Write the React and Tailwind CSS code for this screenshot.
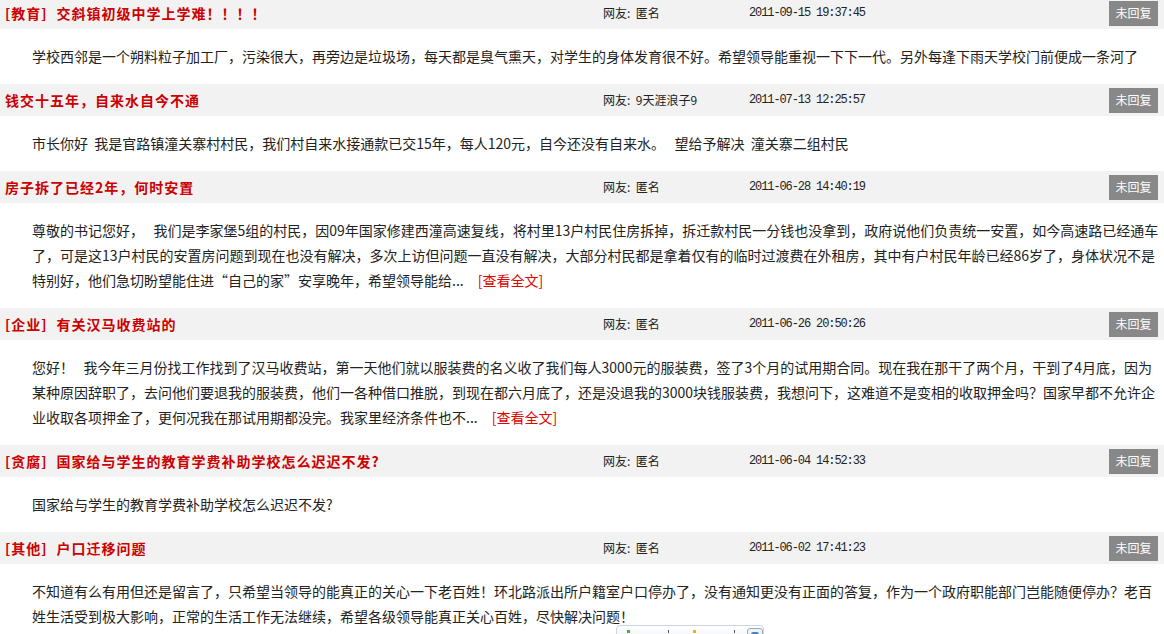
import React from "react";

const posts = [
  {
    tag: "[教育]",
    title: "交斜镇初级中学上学难！！！！",
    author: "匿名",
    date: "2011-09-15 19:37:45",
    lines: [
      "学校西邻是一个朔料粒子加工厂，污染很大，再旁边是垃圾场，每天都是臭气熏天，对学生的身体发育很不好。希望领导能重视一下下一代。另外每逢下雨天学校门前便成一条河了",
    ],
  },
  {
    tag: "",
    title: "钱交十五年，自来水自今不通",
    author: "9天涯浪子9",
    date: "2011-07-13 12:25:57",
    lines: ["市长你好  我是官路镇潼关寨村村民，我们村自来水接通款已交15年，每人120元，自今还没有自来水。   望给予解决  潼关寨二组村民"],
  },
  {
    tag: "",
    title: "房子拆了已经2年，何时安置",
    author: "匿名",
    date: "2011-06-28 14:40:19",
    more: true,
    lines: [
      "尊敬的书记您好，   我们是李家堡5组的村民，因09年国家修建西潼高速复线，将村里13户村民住房拆掉，拆迁款村民一分钱也没拿到，政府说他们负责统一安置，如今高速路已经通车",
      "了，可是这13户村民的安置房问题到现在也没有解决，多次上访但问题一直没有解决，大部分村民都是拿着仅有的临时过渡费在外租房，其中有户村民年龄已经86岁了，身体状况不是",
      "特别好，他们急切盼望能住进“自己的家”安享晚年，希望领导能给...",
    ],
  },
  {
    tag: "[企业]",
    title: "有关汉马收费站的",
    author: "匿名",
    date: "2011-06-26 20:50:26",
    more: true,
    lines: [
      "您好！   我今年三月份找工作找到了汉马收费站，第一天他们就以服装费的名义收了我们每人3000元的服装费，签了3个月的试用期合同。现在我在那干了两个月，干到了4月底，因为",
      "某种原因辞职了，去问他们要退我的服装费，他们一各种借口推脱，到现在都六月底了，还是没退我的3000块钱服装费，我想问下，这难道不是变相的收取押金吗？国家早都不允许企",
      "业收取各项押金了，更何况我在那试用期都没完。我家里经济条件也不...",
    ],
  },
  {
    tag: "[贪腐]",
    title: "国家给与学生的教育学费补助学校怎么迟迟不发?",
    author: "匿名",
    date: "2011-06-04 14:52:33",
    lines: ["国家给与学生的教育学费补助学校怎么迟迟不发?"],
  },
  {
    tag: "[其他]",
    title: "户口迁移问题",
    author: "匿名",
    date: "2011-06-02 17:41:23",
    lines: [
      "不知道有么有用但还是留言了，只希望当领导的能真正的关心一下老百姓！环北路派出所户籍室户口停办了，没有通知更没有正面的答复，作为一个政府职能部门岂能随便停办？老百",
      "姓生活受到极大影响，正常的生活工作无法继续，希望各级领导能真正关心百姓，尽快解决问题！",
    ],
  },
];

function PostItem({ post }) {
  return (
    <div>
      <div className="flex items-center h-[32px] bg-[#f2f2f2]">
        <div className="w-[603px] pl-[5px] flex text-[14px] font-bold tracking-[1px] text-[#cc0000] whitespace-nowrap">
          {post.tag && <span className="mr-[9px]">{post.tag}</span>}
          <span>{post.title}</span>
        </div>
        <div className="w-[146px] text-[12px] text-[#222] whitespace-pre">网友:  {post.author}</div>
        <div className="flex-1 text-[12px] text-[#222] font-['Liberation_Mono',monospace] tracking-[-1.1px]">
          {post.date}
        </div>
        <div className="w-[49px] h-[25px] mr-[6px] bg-[#888888] text-white text-[12px] flex items-center justify-center">
          未回复
        </div>
      </div>
      <div className="pl-[32px] pr-[8px] py-[15px] text-[14px] leading-[25px] text-[#222] whitespace-pre">
        {post.lines.map((l, i) => (
          <div key={i}>
            {l}
            {post.more && i === post.lines.length - 1 && (
              <span className="ml-[14px] text-[#e00000]">[查看全文]</span>
            )}
          </div>
        ))}
      </div>
    </div>
  );
}

export default function App() {
  return (
    <div className="relative w-[1164px] h-[634px] overflow-hidden bg-white font-['Noto_Sans_CJK_SC','Noto_Sans',sans-serif]">
      <div className="-mt-[3px]">
        {posts.map((p, i) => (
          <PostItem key={i} post={p} />
        ))}
      </div>
      {/* floating toolbar peeking at the bottom */}
      <div className="absolute left-[616px] top-[625px] w-[148px] h-[24px] rounded-[4px] border border-[#c9d6e3] bg-gradient-to-b from-white to-[#e8eef5] flex items-start">
        <span className="ml-[10px] mt-[4px] w-[3px] h-[3px] bg-[#3cb33c]"></span>
        <span className="ml-[38px] mt-[4px] w-[2px] h-[3px] bg-[#555]"></span>
        <span className="ml-[24px] mt-[4px] w-[3px] h-[3px] bg-[#e8b800]"></span>
        <span className="ml-[38px] mt-[4px] w-[2px] h-[3px] bg-[#555]"></span>
        <span className="ml-[12px] mt-[2px] w-[18px] h-[18px] rounded-[3px] border border-[#9ab] bg-[#eef3f8] flex items-start justify-center">
          <span className="mt-[3px] w-[8px] h-[5px] rounded-full bg-[#4a7fb8]"></span>
        </span>
      </div>
    </div>
  );
}
